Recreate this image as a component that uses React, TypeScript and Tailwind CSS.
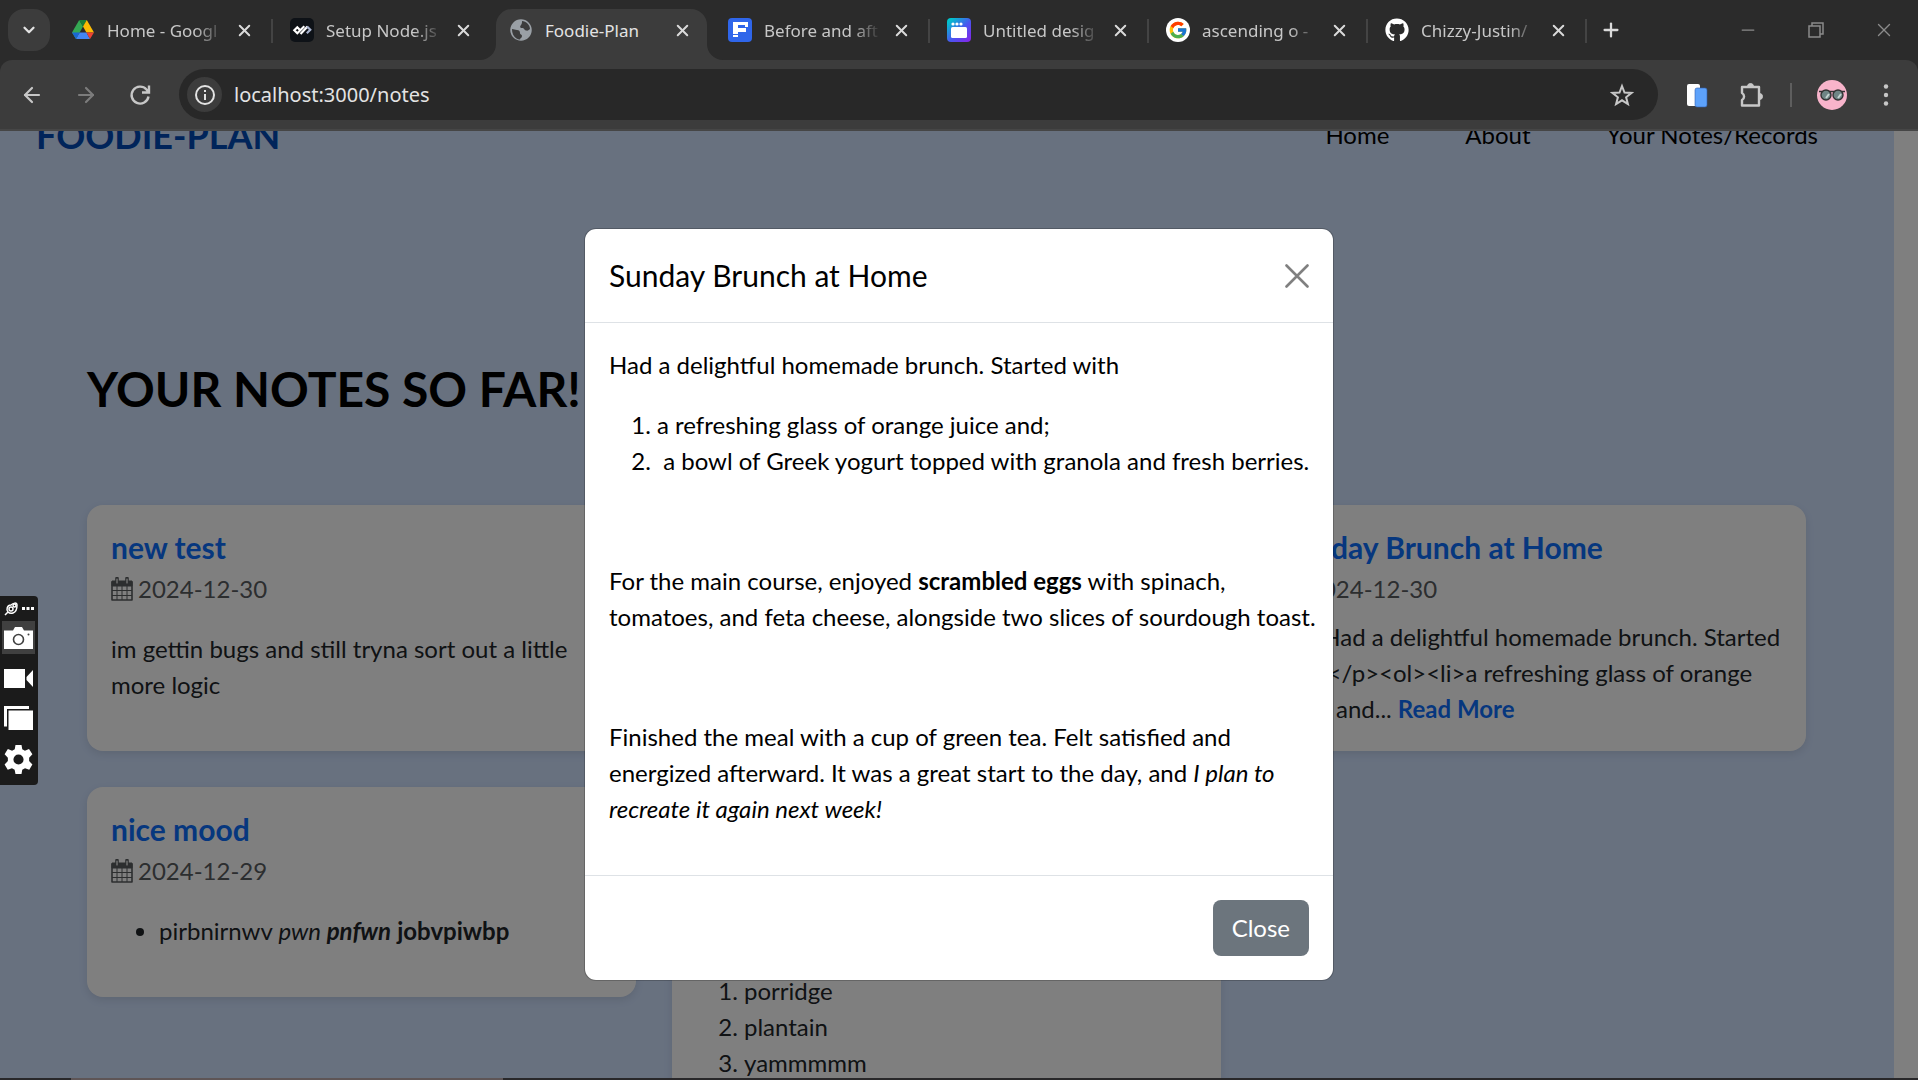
import React from 'react';
import { FaGithub } from 'react-icons/fa';
import { FcGoogle } from 'react-icons/fc';
import { ArrowLeft, ArrowRight, ChevronDown, Minus, Plus, X } from 'lucide-react';

function DriveIcon() {
  return (
    <svg viewBox="0 0 24 24" className="size-6">
      <path d="M8.2 2 12 8.6 5 21 1 14.4z" fill="#34a853" />
      <path d="M8.2 2h7.6L12 8.6z" fill="#188038" />
      <path d="M15.8 2 23 14.4h-7.6L12 8.6z" fill="#fbbc04" />
      <path d="M8.7 14.4h6.7L19 21H5z" fill="#4285f4" />
      <path d="M1 14.4h7.7L5 21z" fill="#1967d2" />
      <path d="M15.4 14.4H23L19 21z" fill="#ea4335" />
    </svg>
  );
}

function DevIcon() {
  return (
    <svg viewBox="0 0 24 24" className="size-6">
      <rect width="24" height="24" rx="5" fill="#0e1217" />
      <path d="M9.500 11.500 7.300 9.300 4.300 12.300 7.300 15.300 14.300 8.300" fill="none" stroke="#fff" strokeWidth="2.200" />
      <path d="m10.500 16 7-7.500" fill="none" stroke="#fff" strokeWidth="2.200" />
      <path d="m17 8.500 3.300 3.300-3.500 3.500" fill="none" stroke="#a8b3cf" strokeWidth="2.200" />
    </svg>
  );
}

function GlobeIcon() {
  return (
    <svg viewBox="0 0 24 24" className="size-6">
      <circle cx="12" cy="12" r="10" fill="#9aa0a6" stroke="#9aa0a6" strokeWidth="1.500" />
      <path d="M3 11c2 0 3 1 5 1s3 1 3 3 2 1 2 3-2 2-2 3.500C6 21 3 17 3 11zM13 3c4 0 8 4 8 8-1 1-2 2-4 1.500s-1.500-2.500-4-2.500-2-2-1-3 1-3 1-4z" fill="#3c3c3c" />
    </svg>
  );
}

function FIcon() {
  return (
    <svg viewBox="0 0 24 24" className="size-6">
      <rect width="24" height="24" rx="4" fill="#2f66ea" />
      <path d="M5 4h15v5h-3V7H10v3h8v4h-8v2H5zM5 17h5v2H5z" fill="#fff" />
    </svg>
  );
}

function DesignIcon() {
  return (
    <svg viewBox="0 0 24 24" className="size-6">
      <defs>
        <linearGradient id="design" x1="0" y1="0" x2="1" y2="1">
          <stop offset="0.100" stopColor="#00c4cc" />
          <stop offset="0.550" stopColor="#4a55f0" />
          <stop offset="1" stopColor="#8a22e8" />
        </linearGradient>
      </defs>
      <rect width="24" height="24" rx="4" fill="url(#design)" />
      <rect x="4" y="9" width="16" height="11" rx="1.500" fill="#fff" />
      <circle cx="6" cy="6" r="1.600" fill="#fff" />
      <circle cx="10" cy="6" r="1.600" fill="#fff" />
      <circle cx="14" cy="6" r="1.600" fill="#fff" />
    </svg>
  );
}

function GoogleIcon() {
  return (
    <span className="flex size-6 items-center justify-center rounded-full bg-white">
      <FcGoogle className="size-5" />
    </span>
  );
}

const tabs = [
  { title: 'Home - Googl', icon: <DriveIcon />, line: true },
  { title: 'Setup Node.js', icon: <DevIcon /> },
  { title: 'Foodie-Plan', icon: <GlobeIcon />, active: true },
  { title: 'Before and aft', icon: <FIcon />, line: true },
  { title: 'Untitled desig', icon: <DesignIcon />, line: true },
  { title: 'ascending o -', icon: <GoogleIcon />, line: true },
  { title: 'Chizzy-Justin/', icon: <FaGithub className="size-6 text-white" />, line: true },
];

function TabStrip() {
  return (
    <div className="flex h-[60px] items-center bg-[#2b2b2b] pl-2">
      <button aria-label="Search tabs" className="mr-1 flex size-[42px] shrink-0 items-center justify-center rounded-2xl bg-[#3c3c3c] text-[#e3e3e3]">
        <ChevronDown size={18} strokeWidth={3} />
      </button>
      {tabs.map((t) => (
        <div key={t.title} className="relative flex h-full w-[219px] min-w-0 items-center px-[17px]">
          {t.active && (
            <div className="absolute inset-x-1 bottom-0 top-[9px] rounded-t-2xl bg-[#3c3c3c]">
              <svg viewBox="0 0 16 16" className="absolute -left-4 bottom-0 size-4" fill="#3c3c3c"><path d="M16 0v16H0A16 16 0 0 0 16 0z" /></svg>
              <svg viewBox="0 0 16 16" className="absolute -right-4 bottom-0 size-4" fill="#3c3c3c"><path d="M0 0v16h16A16 16 0 0 1 0 0z" /></svg>
            </div>
          )}
          <span className="relative shrink-0">{t.icon}</span>
          <span
            className={
              t.active
                ? 'relative ml-3 flex-1 whitespace-nowrap pt-0.5 text-[#e3e3e3]'
                : 'relative ml-3 flex-1 whitespace-nowrap pt-0.5 text-[#c7c7c7] [mask-image:linear-gradient(to_right,black_75%,transparent)]'
            }
          >
            {t.title}
          </span>
          <button aria-label={'Close ' + t.title} className="relative ml-2 flex size-6 shrink-0 items-center justify-center text-[#dadada]">
            <X size={19} strokeWidth={2.5} />
          </button>
          {t.line && <span className="absolute right-0 top-[19px] h-6 w-0.5 bg-[#444]" />}
        </div>
      ))}
      <button aria-label="New tab" className="ml-2 flex size-8 shrink-0 items-center justify-center text-[#dadada]">
        <Plus size={22} strokeWidth={2.5} />
      </button>
      <div className="ml-auto flex text-[#8b8b8b]">
        <button aria-label="Minimize" className="flex w-[68px] items-center justify-center"><Minus size={20} strokeWidth={1.5} /></button>
        <button aria-label="Restore" className="flex w-[68px] items-center justify-center">
          <svg viewBox="0 0 16 16" className="size-4" fill="none" stroke="currentColor" strokeWidth="1.500"><path d="M1 4h11v11H1zM4 4V1h11v11h-3" /></svg>
        </button>
        <button aria-label="Close window" className="flex w-[68px] items-center justify-center"><X size={22} strokeWidth={1.5} /></button>
      </div>
    </div>
  );
}

function Toolbar() {
  return (
    <div className="bg-[#2b2b2b]">
      <div className="flex h-[71px] items-center rounded-t-xl border-b-2 border-[#464646] bg-[#3c3c3c] pl-[5px] text-[#c7c7c7]">
        <button aria-label="Back" className="flex w-[54px] justify-center"><ArrowLeft size={24} strokeWidth={2.2} /></button>
        <button aria-label="Forward" className="flex w-[54px] justify-center text-[#7c7c7c]"><ArrowRight size={24} strokeWidth={2.2} /></button>
        <button aria-label="Reload" className="flex w-[54px] justify-center">
          <svg viewBox="0 0 24 24" className="size-6" fill="none" stroke="currentColor" strokeWidth="2.400"><path d="M20.500 13.500A8.500 8.500 0 1 1 18.500 6.500L20.500 9M21 2.500V9.500H14" /></svg>
        </button>
        <div className="ml-3 flex h-[51px] flex-1 items-center rounded-full bg-[#282828] pl-2 pr-6">
          <span className="flex size-[35px] items-center justify-center rounded-full bg-[#3c3c3c] text-[#e3e3e3]">
            <svg viewBox="0 0 20 20" className="size-5" fill="none" stroke="currentColor" strokeWidth="2"><circle cx="10" cy="10" r="9" /><path d="M10 9v6M10 5v2" /></svg>
          </span>
          <label htmlFor="address" className="sr-only">Address</label>
          <input id="address" defaultValue="localhost:3000/notes" className="ml-3 flex-1 bg-transparent text-xl text-[#e3e3e3] outline-none" />
          <button aria-label="Bookmark this page">
            <svg viewBox="0 0 24 24" className="size-6" fill="none" stroke="currentColor" strokeWidth="2"><path d="m12 3 2.500 6.500 7 .4-5.400 4.400 1.800 6.800L12 17.300l-5.900 3.800 1.800-6.800L2.500 9.900l7-.4z" /></svg>
          </button>
        </div>
        <button aria-label="Extension" className="ml-[26px]">
          <svg viewBox="0 0 24 26" className="size-[26px]"><rect x="2" y="2" width="13" height="22" rx="2" fill="#fff" /><rect x="10" y="6" width="12" height="19" rx="2" fill="#5da2fb" stroke="#2f5fb0" strokeWidth="0.600" /></svg>
        </button>
        <button aria-label="Extensions" className="ml-7">
          <svg viewBox="0 0 26 26" className="size-[26px]" fill="none" stroke="currentColor" strokeWidth="2.400" strokeLinejoin="round">
            <path d="M4 5h17v18.500H4v-5.500a4 4 0 0 0 0-7z" />
            <path d="M9.500 4.500a3 3 0 0 1 6 0zM21.500 11.500a3 3 0 0 1 0 6z" fill="currentColor" strokeWidth="1" />
          </svg>
        </button>
        <span className="ml-[26px] h-6 w-0.5 bg-[#5e5e5e]" />
        <button aria-label="Profile" className="ml-[25px]">
          <svg viewBox="0 0 30 30" className="size-[30px]">
            <circle cx="15" cy="15" r="15" fill="#f8b4cb" />
            <path d="M2 11.500h26" stroke="#333" strokeWidth="1.500" />
            <circle cx="9" cy="15" r="5" fill="#6f8585" stroke="#333" strokeWidth="1.400" />
            <circle cx="21" cy="15" r="5" fill="#6f8585" stroke="#333" strokeWidth="1.400" />
            <path d="m9 18 3-4M21 18l3-4" stroke="#c3d3d0" strokeWidth="2" />
          </svg>
        </button>
        <button aria-label="Menu" className="ml-[27px] mr-5">
          <svg viewBox="0 0 24 24" className="size-6" fill="currentColor"><circle cx="12" cy="3.500" r="2.200" /><circle cx="12" cy="12" r="2.200" /><circle cx="12" cy="20.500" r="2.200" /></svg>
        </button>
      </div>
    </div>
  );
}

function CalendarIcon() {
  return (
    <svg viewBox="0 0 22 24" className="h-6 w-[22px]" fill="none" stroke="currentColor">
      <path d="M1 5h20v18H1z" strokeWidth="1.600" strokeLinejoin="round" />
      <path d="M1 4h20v5H1z" fill="currentColor" />
      <path d="M1 13.500h20M1 18.500h20M6 9v14M11 9v14M16 9v14" strokeWidth="1" />
      <path d="M6 1.500v5M16 1.500v5" strokeWidth="3.600" strokeLinecap="round" />
      <path d="M6 2v4M16 2v4" stroke="#fff" strokeWidth="1.200" strokeLinecap="round" />
    </svg>
  );
}

function NoteCard({ title, date, children }: { title: string; date: string; children: React.ReactNode }) {
  return (
    <article className="rounded-2xl bg-white p-6 text-[#212529] shadow-[0_3px_9px_rgba(0,0,0,0.1)]">
      <h5 className="mb-1.5 text-3xl/9 font-bold text-[#0d6efd]">{title}</h5>
      <div className="flex items-center gap-[5px] text-[#595c5f]">
        <CalendarIcon />
        <time>{date}</time>
      </div>
      {children}
    </article>
  );
}

function NotesPage() {
  return (
    <div className="h-full overflow-hidden bg-white pr-6">
      <div className="flow-root h-full bg-[#d0e2ff]">
        <nav className="-mt-9 flex h-20 items-center justify-between pl-9 pr-[76px] text-black">
          <a href="#home" className="text-[36px]/[54px] font-bold text-[#0049b5]">FOODIE-PLAN</a>
          <div className="flex gap-[76px]">
            <a href="#home">Home</a>
            <a href="#about">About</a>
            <a href="#notes">Your Notes/Records</a>
          </div>
        </nav>
        <section className="pl-[87px] pr-[88px] pt-[184px]">
          <h1 className="text-5xl/[60px] font-bold text-black">YOUR NOTES SO FAR!</h1>
          <div className="mt-[86px] grid grid-cols-3 items-start gap-9">
            <NoteCard title="new test" date="2024-12-30">
              <p className="my-6">im gettin bugs and still tryna sort out a little more logic</p>
            </NoteCard>
            <div className="col-start-3">
              <NoteCard title="Sunday Brunch at Home" date="2024-12-30">
                <p className="mt-3">
                  {'<p>Had a delightful homemade brunch. Started with</p><ol><li>a refreshing glass of orange juice and... '}
                  <a href="#more" className="font-bold text-[#0d6efd]">Read More</a>
                </p>
              </NoteCard>
            </div>
            <NoteCard title="nice mood" date="2024-12-29">
              <ul className="my-6 list-disc pl-12">
                <li>pirbnirnwv <em>pwn <b>pnfwn</b></em> <b>jobvpiwbp</b></li>
              </ul>
            </NoteCard>
            <article className="rounded-2xl bg-white px-6 pb-6 pt-[186px] text-[#212529] shadow-[0_3px_9px_rgba(0,0,0,0.1)]">
              <ol className="mb-6 list-decimal pl-12">
                <li>porridge</li>
                <li>plantain</li>
                <li>yammmmm</li>
              </ol>
            </article>
          </div>
        </section>
      </div>
    </div>
  );
}

function NoteDialog() {
  return (
    <div className="absolute inset-0 flex items-center justify-center bg-black/50">
      <div role="dialog" aria-labelledby="note-title" className="w-[750px] rounded-xl border border-black/20 bg-white bg-clip-padding text-black">
        <header className="flex items-center justify-between border-b border-[#dee2e6] p-6">
          <h2 id="note-title" className="text-3xl/[45px]">Sunday Brunch at Home</h2>
          <button aria-label="Close note" className="text-[#808080]">
            <svg viewBox="0 0 24 24" className="size-6" fill="none" stroke="currentColor" strokeWidth="2.600" strokeLinecap="round"><path d="m1.500 1.500 21 21M22.500 1.500l-21 21" /></svg>
          </button>
        </header>
        <div className="space-y-6 pb-12 pl-6 pr-4 pt-6">
          <p>Had a delightful homemade brunch. Started with</p>
          <ol className="list-decimal pl-12">
            <li>a refreshing glass of orange juice and;</li>
            <li>&nbsp;a bowl of Greek yogurt topped with granola and fresh berries.</li>
          </ol>
          <p><br /></p>
          <p>For the main course, enjoyed <b>scrambled eggs</b> with spinach, tomatoes, and feta cheese, alongside two slices of sourdough toast.</p>
          <p><br /></p>
          <p>Finished the meal with a cup of green tea. Felt satisfied and energized afterward. It was a great start to the day, and <em>I plan to recreate it again next week!</em></p>
        </div>
        <footer className="flex justify-end border-t border-[#dee2e6] p-6">
          <button className="rounded-lg bg-[#6c757d] px-[19px] py-2.5 text-white">Close</button>
        </footer>
      </div>
    </div>
  );
}

function CaptureBar() {
  return (
    <aside className="absolute left-0 top-[596px] flex w-[38px] flex-col rounded-r bg-[#1b1b1b] pb-2 text-white">
      <div className="flex h-[25px] items-center gap-1 pl-1">
        <svg viewBox="0 0 14 14" className="size-[14px]" fill="none" stroke="currentColor" strokeWidth="1.500"><path d="M1 13l3-3C2 8 3 3 7 3c2-2 6-3 6 0s-1 7-4 8-4 0-5-1" /><circle cx="7" cy="7" r="2" /><circle cx="10.500" cy="3.500" r="1.500" /></svg>
        <svg viewBox="0 0 12 4" className="h-1 w-3" fill="currentColor"><path d="M0 0h3v3H0zM4.500 0h3v3h-3zM9 0h3v3H9z" /></svg>
      </div>
      <button aria-label="Take screenshot" className="ml-0.5 flex size-[33px] items-center justify-center bg-[#404040]">
        <svg viewBox="0 0 29 22" className="h-[22px] w-[29px]"><path d="M0 3.500h9L11 0h7l2 3.500h9V22H0z" fill="#fff" /><circle cx="14.500" cy="12.500" r="5" fill="none" stroke="#404040" strokeWidth="1.600" /><circle cx="24.500" cy="7.500" r="1" fill="#404040" /></svg>
      </button>
      <button aria-label="Record video" className="flex h-12 items-center pl-1">
        <svg viewBox="0 0 29 19" className="h-[19px] w-[29px]" fill="currentColor"><path d="M0 0h21v19H0zM22.500 8 29 1v17l-6.500-7z" /></svg>
      </button>
      <button aria-label="Captures" className="flex h-8 items-center pl-1">
        <svg viewBox="0 0 29 24" className="h-6 w-[29px]" fill="currentColor"><path d="M0 0h25v3H3v17.500H0zM4.500 4.500H29V24H4.500z" /></svg>
      </button>
      <button aria-label="Settings" className="flex h-[43px] items-center pl-1 pt-2">
        <svg viewBox="0 0 24 24" className="size-[29px]" fill="currentColor" fillRule="evenodd"><path d="M9.500 0h5l.6 3.600 2.200 1.200L20.700 3.400l2.800 4.200-2.700 3v2.600l2.700 3-2.600 4.200-3.500-1.200-2.300 1.300L14.500 24h-5l-.7-3.500-2.200-1.300-3.500 1.200L.5 16.200l2.700-3v-2.600l-2.700-3 2.700-4.200 3.500 1.400 2.200-1.200zM12 7.800a4.200 4.200 0 1 0 0 8.400 4.200 4.200 0 0 0 0-8.400z" /></svg>
      </button>
    </aside>
  );
}

export default function App() {
  return (
    <div className="relative flex h-screen flex-col overflow-hidden bg-[#2b2b2b]">
      <div className="font-[Noto_Sans,sans-serif] text-[17px]">
        <TabStrip />
        <Toolbar />
      </div>
      <main className="relative min-h-0 flex-1 font-[Lato,sans-serif] text-2xl/9">
        <NotesPage />
        <NoteDialog />
      </main>
      <div className="flex h-0.5 bg-[#29282a]">
        <div className="ml-[71px] w-[432px] bg-[#5e5556]" />
      </div>
      <CaptureBar />
    </div>
  );
}
